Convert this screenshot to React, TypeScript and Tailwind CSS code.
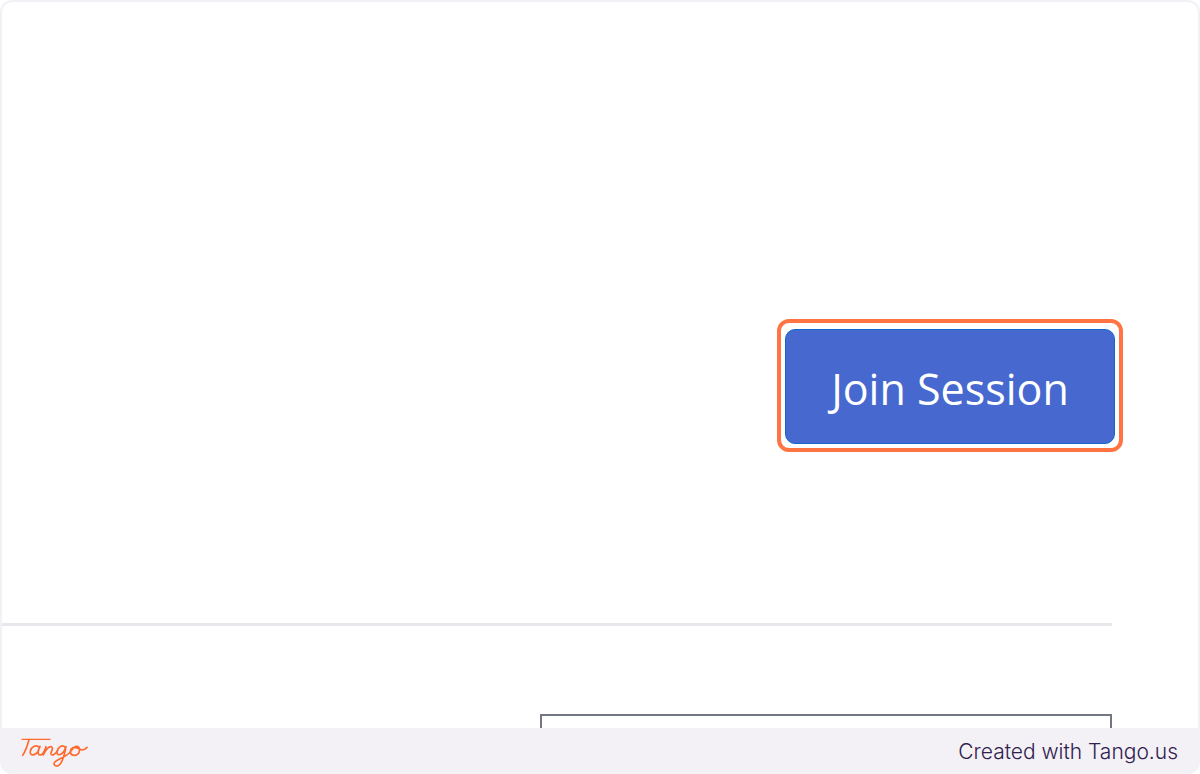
function TangoLogo() {
  return (
    <svg
      viewBox="0 0 216 102"
      className="h-[34px] w-[72px]"
      fill="none"
      stroke="#ff6a2f"
      strokeWidth="5"
      strokeLinecap="round"
      strokeLinejoin="round"
      role="img"
      aria-label="Tango"
    >
      <path d="M12 16H96" strokeWidth="4" />
      <path d="M33 17C29 32 24 48 14 64" />
      <path d="M63 40C56 30 40 38 37 51C34 67 52 66 60 52L66 37C61 48 57 63 66 63C76 63 80 49 84 38C84 47 79 54 76 63C83 48 92 37 100 38C109 41 97 54 99 60C102 67 113 60 119 50" />
      <path d="M141 40C134 31 120 38 117 52C115 66 129 65 138 52L144 38C141 55 134 81 126 91C118 101 105 94 109 86C115 76 139 72 154 57C162 49 165 39 174 37C189 35 188 61 171 64C155 65 153 48 164 41C174 36 183 48 194 48C200 47 204 44 207 40" />
    </svg>
  );
}

export default function App() {
  return (
    <div className="flex h-screen flex-col overflow-hidden rounded-xl bg-[#f3f1f6] px-0.5 pt-0.5 font-['Open_Sans',sans-serif]">
      <main className="flex min-h-0 flex-1 flex-col overflow-hidden rounded-t-[10px] bg-white pr-[86px]">
        <section className="flex min-h-0 flex-1 flex-col items-end border-b-3 border-[#e8e8ec] pt-[317px]">
          <div className="-mr-[11px] rounded-xl border-4 border-[#ff7442] px-1 pt-[6px] pb-1">
            <button
              type="button"
              className="flex h-[115px] w-[330px] items-center justify-center rounded-[10px] border border-[#1268cf] bg-[#4668cf] pt-1 text-[43px] leading-none font-medium text-white"
            >
              Join Session
            </button>
          </div>
        </section>
        <section className="flex h-[102px] shrink-0 items-end justify-end">
          <div className="h-[14px] w-[572px] border-2 border-b-0 border-[#737782]" />
        </section>
      </main>
      <footer className="flex h-[46px] shrink-0 items-center justify-between pr-5 pl-4">
        <a href="#tango">
          <TangoLogo />
        </a>
        <p className="font-['Inter',sans-serif] text-[21px] leading-none font-light text-[#30204f]">
          Created with Tango.us
        </p>
      </footer>
    </div>
  );
}
